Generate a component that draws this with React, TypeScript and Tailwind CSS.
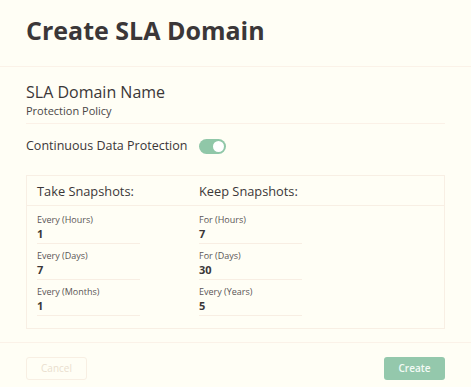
const takeFields = [
  { label: 'Every (Hours)', value: '1' },
  { label: 'Every (Days)', value: '7' },
  { label: 'Every (Months)', value: '1' },
]

const keepFields = [
  { label: 'For (Hours)', value: '7' },
  { label: 'For (Days)', value: '30' },
  { label: 'Every (Years)', value: '5' },
]

function Field({ label, value }: { label: string; value: string }) {
  return (
    <div className="w-[103px] border-b border-[#f8eee3] pb-[1px]">
      <div className="text-[9px] leading-[12px] text-[#5a5555]">{label}</div>
      <div className="text-[11px] leading-[16px] font-bold text-[#3b3738]">{value}</div>
    </div>
  )
}

function Toggle() {
  return (
    <div className="flex h-[15px] w-[27px] items-center justify-end rounded-full bg-[#90c7a8] px-[2px]">
      <div className="h-[11px] w-[11px] rounded-full bg-white" />
    </div>
  )
}

export default function App() {
  return (
    <div
      className="h-[387px] w-full bg-[#fffef5] text-[#3b3738]"
      style={{ fontFamily: '"Open Sans", "Liberation Sans", sans-serif' }}
    >
      <div className="h-[67px] border-b border-[#fbf2e8] px-[26px] pt-[14px]">
        <h1 className="text-[25px] leading-8 font-bold">Create SLA Domain</h1>
      </div>

      <div className="px-[26px]">
        <div className="border-b border-[#fbf1e7] pt-[14px] pb-[5px]">
          <div className="text-[16px] leading-[22px]">SLA Domain Name</div>
          <div className="text-[11px] leading-[15px] text-[#4a4646]">Protection Policy</div>
        </div>

        <div className="mt-[13px] flex items-center gap-[12px]">
          <span className="text-[12.5px] leading-[18px] font-medium">Continuous Data Protection</span>
          <Toggle />
        </div>

        <div className="mt-[20px] border border-[#f8efe4]">
          <div className="grid grid-cols-[162px_1fr] border-b border-[#f8efe4] px-[10px] pt-[6px] pb-[5px] text-[12.8px] leading-[18px] font-medium">
            <span>Take Snapshots:</span>
            <span>Keep Snapshots:</span>
          </div>
          <div className="grid grid-cols-[162px_1fr] px-[10px] pt-[8px] pb-[12px]">
            <div className="flex flex-col gap-[6px]">
              {takeFields.map((f) => (
                <Field key={f.label} label={f.label} value={f.value} />
              ))}
            </div>
            <div className="flex flex-col gap-[6px]">
              {keepFields.map((f) => (
                <Field key={f.label} label={f.label} value={f.value} />
              ))}
            </div>
          </div>
        </div>
      </div>

      <div className="mt-[13px] flex items-center justify-between border-t border-[#fbf2e8] px-[26px] pt-[13px]">
        <button className="mt-[1px] h-[23px] w-[61px] rounded-[3px] border border-[#f8efe3] text-[10px] text-[#eadfcf]">
          Cancel
        </button>
        <button className="h-[23px] w-[61px] rounded-[3px] bg-[#94c8ac] text-[10px] font-semibold text-[#f4fbf6]">
          Create
        </button>
      </div>
    </div>
  )
}
